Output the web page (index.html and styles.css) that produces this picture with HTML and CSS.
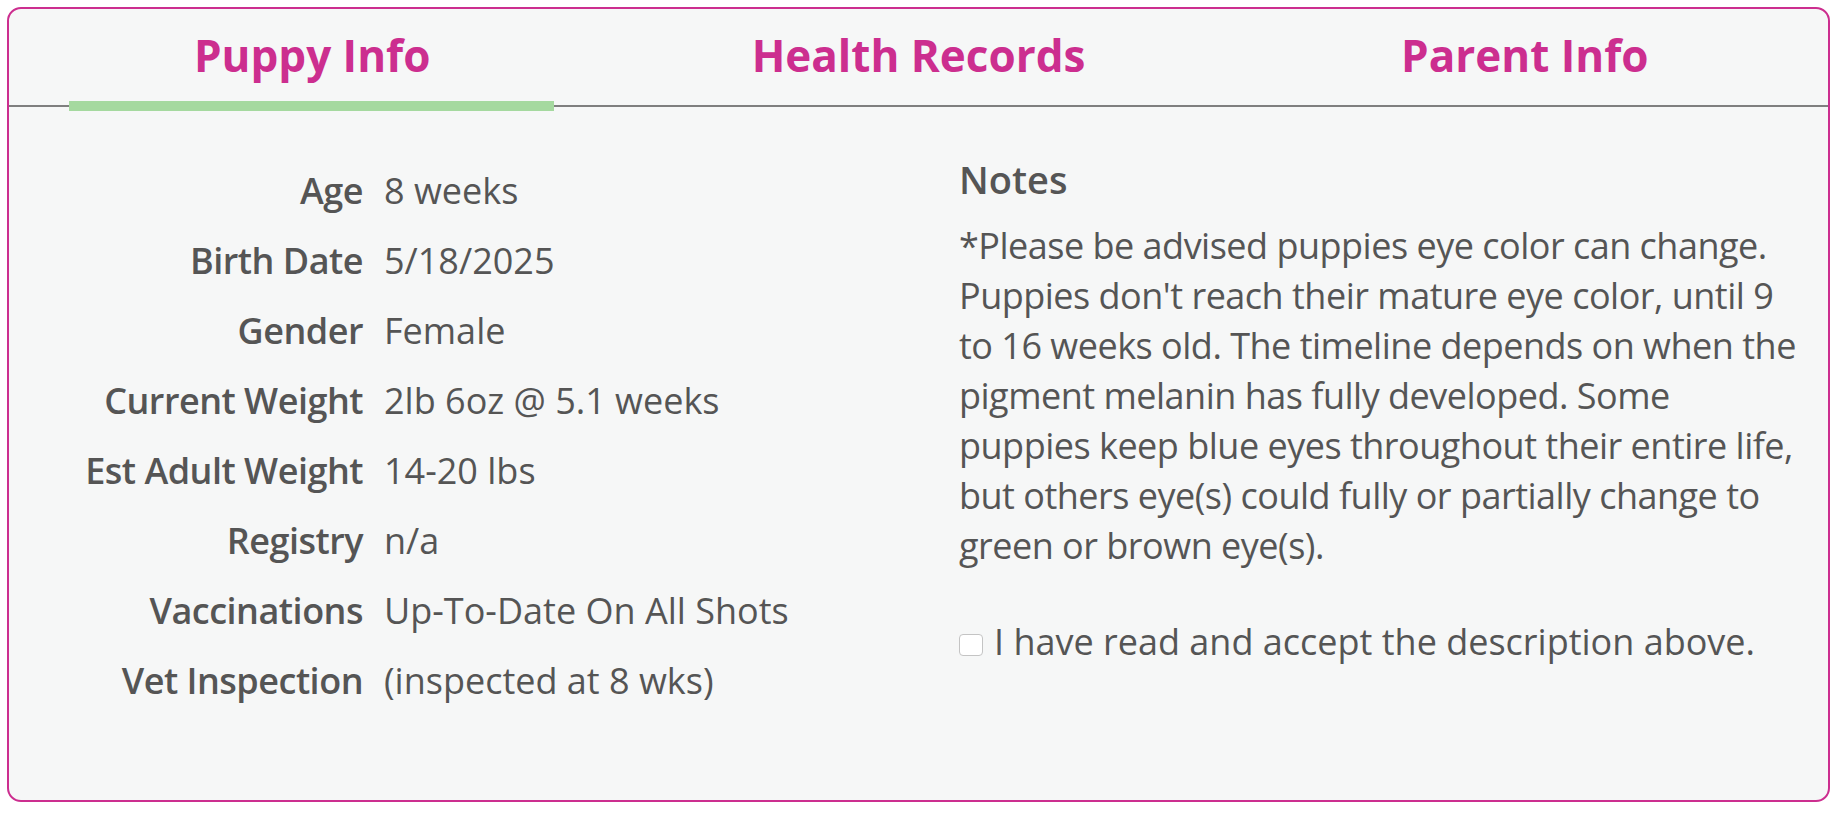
FILE: index.html
```html
<!DOCTYPE html>
<html lang="en">
<head>
    <meta charset="UTF-8">
    <meta name="viewport" content="width=device-width, initial-scale=1.0">
    <title>Puppy Info</title>
    <link rel="stylesheet" href="styles.css">
</head>
<body>
    <div class="card">
        <div class="tabs">
            <div class="tab active">Puppy Info</div>
            <div class="tab">Health Records</div>
            <div class="tab">Parent Info</div>
        </div>
        <div class="tab-body">
            <div class="details">
                <div class="label">Age</div><div class="value">8 weeks</div>
                <div class="label">Birth Date</div><div class="value">5/18/2025</div>
                <div class="label">Gender</div><div class="value">Female</div>
                <div class="label">Current Weight</div><div class="value">2lb 6oz @ 5.1 weeks</div>
                <div class="label">Est Adult Weight</div><div class="value">14-20 lbs</div>
                <div class="label">Registry</div><div class="value">n/a</div>
                <div class="label">Vaccinations</div><div class="value">Up-To-Date On All Shots</div>
                <div class="label">Vet Inspection</div><div class="value">(inspected at 8 wks)</div>
            </div>
            <div class="notes">
                <h3>Notes</h3>
                <p>*Please be advised puppies eye color can change. Puppies don't reach their mature eye color, until 9 to 16 weeks old. The timeline depends on when the pigment melanin has fully developed. Some puppies keep blue eyes throughout their entire life, but others eye(s) could fully or partially change to green or brown eye(s).</p>
                <label class="accept"><input type="checkbox" id="accept"> I have read and accept the description above.</label>
            </div>
        </div>
    </div>
</body>
</html>
```

FILE: styles.css
```css
body {
    font-family: 'Open Sans', 'Noto Sans', sans-serif;
    background-color: #ffffff;
    color: #555555;
    margin: 0;
    padding: 7px 18px 19px 7px;
}
.card {
    background-color: #f6f7f7;
    border: 2px solid #cc2e8f;
    border-radius: 14px;
    padding-bottom: 84px;
}
.tabs {
    display: grid;
    grid-template-columns: 1fr 1fr 1fr;
    border-bottom: 2px solid #7f7f7f;
}
.tab {
    position: relative;
    height: 96px;
    display: flex;
    align-items: center;
    justify-content: center;
    padding-bottom: 4px;
    box-sizing: border-box;
    font-size: 44px;
    font-weight: 700;
    color: #cc2e8f;
    cursor: pointer;
}
.tab.active::after {
    content: "";
    position: absolute;
    left: 60px;
    right: 61px;
    bottom: -6px;
    height: 10px;
    background-color: #a5d99f;
}
.tab-body {
    display: grid;
    grid-template-columns: 950px 1fr;
}
.details {
    display: grid;
    grid-template-columns: 354px auto;
    column-gap: 21px;
    align-content: start;
    padding-top: 49px;
    font-size: 36px;
    line-height: 70px;
}
.label {
    text-align: right;
    font-weight: 600;
    letter-spacing: -0.5px;
}
.notes {
    width: 846px;
    padding-top: 50px;
    font-size: 36px;
}
.notes h3 {
    margin: 0 0 18px;
    font-size: 38px;
    font-weight: 600;
    line-height: 1.2;
}
.notes p {
    margin: 0;
    line-height: 50px;
    letter-spacing: -0.5px;
}
.accept {
    display: flex;
    align-items: center;
    gap: 11px;
    margin-top: 46px;
    line-height: 50px;
}
.accept input {
    appearance: none;
    flex-shrink: 0;
    width: 24px;
    height: 22px;
    margin: 6px 0 0 0;
    border: 1px solid #c4c4c4;
    border-radius: 4px;
    background-color: #ffffff;
}
```
